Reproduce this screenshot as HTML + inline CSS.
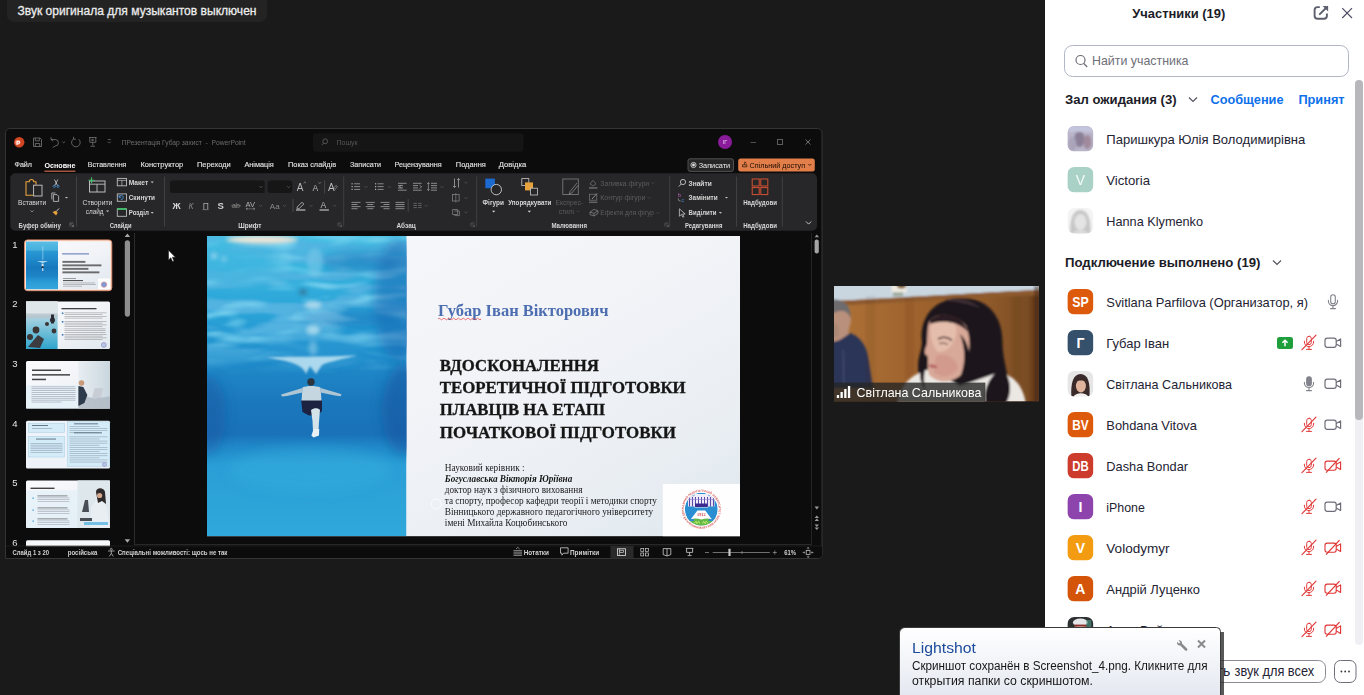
<!DOCTYPE html>
<html lang="ru"><head><meta charset="utf-8"><title>Zoom</title>
<style>
*{box-sizing:border-box;margin:0;padding:0}
html,body{width:1364px;height:695px;overflow:hidden;background:#1a1a1a;font-family:"Liberation Sans",sans-serif}
.layer{position:absolute;left:0;top:0;font-family:"Liberation Sans",sans-serif}
text{white-space:pre}
</style></head>
<body>
<svg width="0" height="0" style="position:absolute"><defs>
<clipPath id="avclip"><rect x="0" y="0" width="26" height="25.5" rx="7"/></clipPath>
<filter id="b1" x="-20%" y="-20%" width="140%" height="140%"><feGaussianBlur stdDeviation="1"/></filter>
<filter id="b05" x="-20%" y="-20%" width="140%" height="140%"><feGaussianBlur stdDeviation="0.5"/></filter>
<filter id="b2" x="-20%" y="-20%" width="140%" height="140%"><feGaussianBlur stdDeviation="2"/></filter>
<filter id="b3" x="-30%" y="-30%" width="160%" height="160%"><feGaussianBlur stdDeviation="3"/></filter>
<filter id="b6" x="-30%" y="-30%" width="160%" height="160%"><feGaussianBlur stdDeviation="6"/></filter>

<clipPath id="ppclip"><path d="M5.5 558 V133 a4.5 4.5 0 0 1 4.5 -4.5 H817.5 a4.5 4.5 0 0 1 4.5 4.5 V554 a4 4 0 0 1 -4 4 Z"/></clipPath>
<linearGradient id="slidebg" x1="0" y1="0" x2="1" y2="1"><stop offset="0" stop-color="#fafbfd"/><stop offset="0.55" stop-color="#f1f3f7"/><stop offset="1" stop-color="#dfe8ef"/></linearGradient>
<linearGradient id="water" x1="0" y1="0" x2="0" y2="1"><stop offset="0" stop-color="#4fb4e0"/><stop offset="0.12" stop-color="#2f9fd6"/><stop offset="0.3" stop-color="#2490cf"/><stop offset="0.55" stop-color="#1878bd"/><stop offset="0.72" stop-color="#1e84c6"/><stop offset="0.85" stop-color="#2c9cd6"/><stop offset="1" stop-color="#36a6dc"/></linearGradient>
<linearGradient id="pool" x1="0" y1="0" x2="0" y2="1"><stop offset="0" stop-color="#d8e4ea"/><stop offset="0.4" stop-color="#9ccfe0"/><stop offset="1" stop-color="#2fa4cc"/></linearGradient>
<linearGradient id="lab" x1="0" y1="0" x2="1" y2="0"><stop offset="0" stop-color="#e8eef2"/><stop offset="1" stop-color="#c9d6de"/></linearGradient>

<clipPath id="photoclip"><rect x="207" y="236" width="199.5" height="300.2"/></clipPath>
<radialGradient id="rg1" cx="0.5" cy="0.5" r="0.5"><stop offset="0" stop-color="#fff" stop-opacity="0.9"/><stop offset="1" stop-color="#fff" stop-opacity="0"/></radialGradient>
<linearGradient id="slidebg2" x1="0" y1="0" x2="1" y2="1"><stop offset="0" stop-color="#f6f7fa"/><stop offset="0.45" stop-color="#f3f4f8"/><stop offset="0.8" stop-color="#e9eef3"/><stop offset="1" stop-color="#dde7ee"/></linearGradient>

<linearGradient id="water2" x1="0" y1="0" x2="0" y2="1">
<stop offset="0" stop-color="#48c0e4"/><stop offset="0.1" stop-color="#38b4de"/><stop offset="0.25" stop-color="#2aa4d8"/><stop offset="0.4" stop-color="#208ecc"/><stop offset="0.55" stop-color="#1b78bc"/><stop offset="0.66" stop-color="#1a72b8"/><stop offset="0.7" stop-color="#2088c8"/><stop offset="0.76" stop-color="#2a9ed6"/><stop offset="1" stop-color="#2fa8da"/></linearGradient>
<filter id="waves" x="0" y="0" width="100%" height="100%"><feTurbulence type="fractalNoise" baseFrequency="0.012 0.07" numOctaves="3" seed="7" result="n"/><feColorMatrix in="n" type="matrix" values="0 0 0 0 0.09  0 0 0 0 0.45  0 0 0 0 0.75  7 0 0 0 -3.1"/><feGaussianBlur stdDeviation="0.8"/></filter>
<filter id="waves2" x="0" y="0" width="100%" height="100%"><feTurbulence type="fractalNoise" baseFrequency="0.02 0.09" numOctaves="2" seed="23" result="n"/><feColorMatrix in="n" type="matrix" values="0 0 0 0 0.27  0 0 0 0 0.72  0 0 0 0 0.91  0 4 0 0 -2.0"/><feGaussianBlur stdDeviation="0.8"/></filter>
<linearGradient id="wmaskg" x1="0" y1="0" x2="0" y2="1"><stop offset="0" stop-color="#fff" stop-opacity="0.75"/><stop offset="0.3" stop-color="#fff" stop-opacity="1"/><stop offset="0.38" stop-color="#fff" stop-opacity="0.6"/><stop offset="0.46" stop-color="#fff" stop-opacity="0"/></linearGradient>
<mask id="wmask"><rect x="207" y="236" width="200" height="301" fill="url(#wmaskg)"/></mask>
<linearGradient id="vign" x1="0" y1="0" x2="1" y2="0"><stop offset="0" stop-color="#10509c" stop-opacity="0.28"/><stop offset="0.18" stop-color="#10509c" stop-opacity="0"/><stop offset="0.7" stop-color="#10509c" stop-opacity="0"/><stop offset="1" stop-color="#0e4a98" stop-opacity="0.42"/></linearGradient>

<clipPath id="logoclip"><circle cx="701.3" cy="509.2" r="16.4"/></clipPath><path id="logoarc" d="M701.3 526.7 a17.5 17.5 0 1 1 0.01 0"/>
<clipPath id="vclip"><rect x="834" y="286" width="205" height="115.3"/></clipPath>
<linearGradient id="wood" x1="0" y1="0" x2="1" y2="0"><stop offset="0" stop-color="#ae7238"/><stop offset="0.35" stop-color="#a0642e"/><stop offset="0.75" stop-color="#905a2a"/><stop offset="1" stop-color="#744822"/></linearGradient>

<linearGradient id="lsbg" x1="0" y1="0" x2="0" y2="1"><stop offset="0" stop-color="#ffffff"/><stop offset="0.35" stop-color="#f6f7fa"/><stop offset="1" stop-color="#e2e6ef"/></linearGradient>
</defs></svg>
<svg id="bg" class="layer" width="1364" height="695" viewBox="0 0 1364 695" >
<rect x="0" y="0" width="1045" height="695" fill="#1a1a1a"/>
<rect x="7" y="-8" width="260" height="30" fill="#232323" rx="7"/>
<text x="17.5" y="15.2" font-size="13" fill="#ececec" textLength="239" lengthAdjust="spacingAndGlyphs" stroke="#ececec" stroke-width="0.3">Звук оригинала для музыкантов выключен</text>
</svg>
<svg id="panel" class="layer" width="1364" height="695" viewBox="0 0 1364 695" >
<rect x="1045" y="0" width="319" height="695" fill="#ffffff"/>
<text x="1132.3" y="17.8" font-size="13.6" fill="#1c1c28" font-weight="bold" textLength="93" lengthAdjust="spacingAndGlyphs">Участники (19)</text>
<path d="M1319.8 7.1 h-2.2 a3 3 0 0 0 -3 3 v5.6 a3 3 0 0 0 3 3 h6.3 a3 3 0 0 0 3 -3 v-2.2" fill="none" stroke="#5c606c" stroke-width="1.9" stroke-linecap="butt"/>
<path d="M1319.8 14.2 L1326 8" fill="none" stroke="#5c606c" stroke-width="1.9" stroke-linecap="round"/>
<path d="M1322.6 6.1 H1328.1 V11.6 Z" fill="#5c606c"/>
<path d="M1342.2 8.2 L1352 18 M1352 8.2 L1342.2 18" fill="none" stroke="#4c4a60" stroke-width="1.15"/>
<rect x="1064.5" y="45.5" width="284" height="31" fill="#fff" rx="8" stroke="#b2b6c4" stroke-width="1"/>
<circle cx="1080.5" cy="60" r="4.5" fill="none" stroke="#6e6e78" stroke-width="1.2"/>
<line x1="1083.8" y1="63.5" x2="1087.2" y2="67" stroke="#6e6e78" stroke-width="1.2" />
<text x="1092" y="65.3" font-size="13.5" fill="#6e6e78" textLength="96.5" lengthAdjust="spacingAndGlyphs">Найти участника</text>
<rect x="1355" y="80" width="8" height="565" fill="#f0f0f4" rx="4"/>
<rect x="1355" y="80" width="8" height="340" fill="#b7b7bc" rx="4"/>
<text x="1065" y="103.8" font-size="13.6" fill="#1c1c28" font-weight="bold" textLength="111.6" lengthAdjust="spacingAndGlyphs">Зал ожидания (3)</text>
<path d="M1189 97.5 l4 4 l4 -4" fill="none" stroke="#55555f" stroke-width="1.2"/>
<text x="1210.5" y="103.8" font-size="13.6" fill="#0e71eb" font-weight="bold" textLength="73" lengthAdjust="spacingAndGlyphs">Сообщение</text>
<text x="1298.4" y="103.8" font-size="13.6" fill="#0e71eb" font-weight="bold" textLength="46.2" lengthAdjust="spacingAndGlyphs">Принят</text>
<text x="1065" y="266.8" font-size="13.6" fill="#1c1c28" font-weight="bold" textLength="195.5" lengthAdjust="spacingAndGlyphs">Подключение выполнено (19)</text>
<path d="M1273 260.5 l4 4 l4 -4" fill="none" stroke="#55555f" stroke-width="1.2"/>
<g transform="translate(1067.4,126)" clip-path="url(#avclip)"><rect width="26" height="25.5" fill="#b9b4c8"/><g filter="url(#b1)"><ellipse cx="12" cy="13" rx="5" ry="8" fill="#8a7f96"/><ellipse cx="20" cy="16" rx="4" ry="7" fill="#a08a9c"/><rect x="0" y="0" width="26" height="6" fill="#c4c4dc"/><ellipse cx="5" cy="18" rx="4" ry="7" fill="#aaa4ba"/></g></g>
<text x="1106.3" y="143.8" font-size="13.5" fill="#232333" textLength="199" lengthAdjust="spacingAndGlyphs">Паришкура Юлія Володимирівна</text>
<g transform="translate(1067.4,167)" clip-path="url(#avclip)"><rect width="26" height="25.5" fill="#a9d1c5"/></g>
<text x="1080.4" y="185" font-size="14" font-weight="normal" fill="#fff" text-anchor="middle" opacity="0.9">V</text>
<text x="1106.3" y="184.8" font-size="13.5" fill="#232333" textLength="43.7" lengthAdjust="spacingAndGlyphs">Victoria</text>
<g transform="translate(1067.4,208)" clip-path="url(#avclip)"><rect width="26" height="25.5" fill="#f4f4f4"/><g filter="url(#b1)"><path d="M3 26 C2 10 6 2 13 2 C20 2 24 10 23 26 Z" fill="#c6c6c6"/><ellipse cx="13" cy="14" rx="6" ry="8" fill="#e4e4e4"/><ellipse cx="13" cy="26" rx="8" ry="4" fill="#dcdcdc"/></g></g>
<text x="1106.3" y="225.8" font-size="13.5" fill="#232333" textLength="96.7" lengthAdjust="spacingAndGlyphs">Hanna Klymenko</text>
<g transform="translate(1067.4,289)" clip-path="url(#avclip)"><rect width="26" height="25.5" fill="#dd5a0c"/></g>
<text x="1072.2" y="307" font-size="14" font-weight="bold" fill="#fff" textLength="16.4" lengthAdjust="spacingAndGlyphs">SP</text>
<text x="1106.3" y="306.8" font-size="13.5" fill="#232333" textLength="201.7" lengthAdjust="spacingAndGlyphs">Svitlana Parfilova (Организатор, я)</text>
<g stroke="#82828c" stroke-width="1.1" fill="none" stroke-linecap="round"><rect x="1330.7" y="294.7" width="4.6" height="9" rx="2.3" fill="none"/><path d="M1328.4 300.2 v0.8 a4.6 4.6 0 0 0 9.2 0 v-0.8"/><path d="M1333 305.7 v2.6 M1330.5 308.59999999999997 h5"/></g>
<g transform="translate(1067.4,330)" clip-path="url(#avclip)"><rect width="26" height="25.5" fill="#35506b"/></g>
<text x="1080.4" y="348" font-size="14" font-weight="bold" fill="#fff" text-anchor="middle">Г</text>
<text x="1106.3" y="347.8" font-size="13.5" fill="#232333" textLength="62.8" lengthAdjust="spacingAndGlyphs">Губар Іван</text>
<rect x="1277" y="337" width="16" height="12" fill="#1f9e3c" rx="2.5"/>
<path d="M1285 346.2 v-5.6 M1282.4 342.8 l2.6 -2.6 l2.6 2.6" fill="none" stroke="#fff" stroke-width="1.5"/>
<g stroke="#de2828" stroke-width="1" fill="none" stroke-linecap="round" opacity="0.9"><rect x="1306.7" y="336.2" width="4.6" height="8.5" rx="2.3"/><path d="M1304.4 341.2 v0.8 a4.6 4.6 0 0 0 9.2 0 v-0.8"/><path d="M1309 346.7 v2.4 M1306.5 349.4 h5"/><path d="M1316 335.2 L1302 349.7" stroke-width="1.2"/></g>
<g stroke="#6e6e7a" stroke-width="1.2" fill="none" stroke-linejoin="round"><rect x="1325" y="338.09999999999997" width="11.2" height="9.2" rx="2.2"/><path d="M1336.2 341.5 L1340.6 338.9 V346.5 L1336.2 343.9"/></g>
<g transform="translate(1067.4,371)" clip-path="url(#avclip)"><rect width="26" height="25.5" fill="#e6e6e6"/><g filter="url(#b05)"><path d="M4 26 C3 12 6 3 13 3 C21 3 23 12 22 26 Z" fill="#3a2c2a"/><ellipse cx="13.5" cy="15" rx="5" ry="6.5" fill="#e0b49c"/><path d="M7 11 C9 6 18 6 20 11 C16 9 11 9 7 11Z" fill="#3a2c2a"/><path d="M6 26 C8 21 19 21 21 26Z" fill="#f2f0ee"/></g></g>
<text x="1106.3" y="388.8" font-size="13.5" fill="#232333" textLength="125.7" lengthAdjust="spacingAndGlyphs">Світлана Сальникова</text>
<g stroke="#82828c" stroke-width="1.1" fill="none" stroke-linecap="round"><rect x="1306.7" y="376.7" width="4.6" height="9" rx="2.3" fill="#82828c"/><path d="M1304.4 382.2 v0.8 a4.6 4.6 0 0 0 9.2 0 v-0.8"/><path d="M1309 387.7 v2.6 M1306.5 390.59999999999997 h5"/></g>
<g stroke="#6e6e7a" stroke-width="1.2" fill="none" stroke-linejoin="round"><rect x="1325" y="379.09999999999997" width="11.2" height="9.2" rx="2.2"/><path d="M1336.2 382.5 L1340.6 379.9 V387.5 L1336.2 384.9"/></g>
<g transform="translate(1067.4,412)" clip-path="url(#avclip)"><rect width="26" height="25.5" fill="#dd5a0c"/></g>
<text x="1072.2" y="430" font-size="14" font-weight="bold" fill="#fff" textLength="16.4" lengthAdjust="spacingAndGlyphs">BV</text>
<text x="1106.3" y="429.8" font-size="13.5" fill="#232333" textLength="90.6" lengthAdjust="spacingAndGlyphs">Bohdana Vitova</text>
<g stroke="#de2828" stroke-width="1" fill="none" stroke-linecap="round" opacity="0.9"><rect x="1306.7" y="418.2" width="4.6" height="8.5" rx="2.3"/><path d="M1304.4 423.2 v0.8 a4.6 4.6 0 0 0 9.2 0 v-0.8"/><path d="M1309 428.7 v2.4 M1306.5 431.4 h5"/><path d="M1316 417.2 L1302 431.7" stroke-width="1.2"/></g>
<g stroke="#6e6e7a" stroke-width="1.2" fill="none" stroke-linejoin="round"><rect x="1325" y="420.09999999999997" width="11.2" height="9.2" rx="2.2"/><path d="M1336.2 423.5 L1340.6 420.9 V428.5 L1336.2 425.9"/></g>
<g transform="translate(1067.4,453)" clip-path="url(#avclip)"><rect width="26" height="25.5" fill="#cc3b2b"/></g>
<text x="1072.2" y="471" font-size="14" font-weight="bold" fill="#fff" textLength="16.4" lengthAdjust="spacingAndGlyphs">DB</text>
<text x="1106.3" y="470.8" font-size="13.5" fill="#232333" textLength="81.8" lengthAdjust="spacingAndGlyphs">Dasha Bondar</text>
<g stroke="#de2828" stroke-width="1" fill="none" stroke-linecap="round" opacity="0.9"><rect x="1306.7" y="459.2" width="4.6" height="8.5" rx="2.3"/><path d="M1304.4 464.2 v0.8 a4.6 4.6 0 0 0 9.2 0 v-0.8"/><path d="M1309 469.7 v2.4 M1306.5 472.4 h5"/><path d="M1316 458.2 L1302 472.7" stroke-width="1.2"/></g>
<g stroke="#de2828" stroke-width="1.1" fill="none" stroke-linejoin="round" opacity="0.95"><rect x="1325" y="461.09999999999997" width="11.2" height="9.2" rx="2.2"/><path d="M1336.2 464.5 L1340.6 461.9 V469.5 L1336.2 466.9"/><path d="M1339.5 458.2 L1326 472.7" stroke-width="1.2"/></g>
<g transform="translate(1067.4,494)" clip-path="url(#avclip)"><rect width="26" height="25.5" fill="#8e44ad"/></g>
<text x="1080.4" y="512" font-size="14" font-weight="bold" fill="#fff" text-anchor="middle">I</text>
<text x="1106.3" y="511.8" font-size="13.5" fill="#232333" textLength="38.6" lengthAdjust="spacingAndGlyphs">iPhone</text>
<g stroke="#de2828" stroke-width="1" fill="none" stroke-linecap="round" opacity="0.9"><rect x="1306.7" y="500.2" width="4.6" height="8.5" rx="2.3"/><path d="M1304.4 505.2 v0.8 a4.6 4.6 0 0 0 9.2 0 v-0.8"/><path d="M1309 510.7 v2.4 M1306.5 513.4 h5"/><path d="M1316 499.2 L1302 513.7" stroke-width="1.2"/></g>
<g stroke="#6e6e7a" stroke-width="1.2" fill="none" stroke-linejoin="round"><rect x="1325" y="502.09999999999997" width="11.2" height="9.2" rx="2.2"/><path d="M1336.2 505.5 L1340.6 502.9 V510.5 L1336.2 507.9"/></g>
<g transform="translate(1067.4,535)" clip-path="url(#avclip)"><rect width="26" height="25.5" fill="#f39c12"/></g>
<text x="1080.4" y="553" font-size="14" font-weight="bold" fill="#fff" text-anchor="middle">V</text>
<text x="1106.3" y="552.8" font-size="13.5" fill="#232333" textLength="63.3" lengthAdjust="spacingAndGlyphs">Volodymyr</text>
<g stroke="#de2828" stroke-width="1" fill="none" stroke-linecap="round" opacity="0.9"><rect x="1306.7" y="541.2" width="4.6" height="8.5" rx="2.3"/><path d="M1304.4 546.2 v0.8 a4.6 4.6 0 0 0 9.2 0 v-0.8"/><path d="M1309 551.7 v2.4 M1306.5 554.4000000000001 h5"/><path d="M1316 540.2 L1302 554.7" stroke-width="1.2"/></g>
<g stroke="#de2828" stroke-width="1.1" fill="none" stroke-linejoin="round" opacity="0.95"><rect x="1325" y="543.1" width="11.2" height="9.2" rx="2.2"/><path d="M1336.2 546.5 L1340.6 543.9000000000001 V551.5 L1336.2 548.9000000000001"/><path d="M1339.5 540.2 L1326 554.7" stroke-width="1.2"/></g>
<g transform="translate(1067.4,576)" clip-path="url(#avclip)"><rect width="26" height="25.5" fill="#d4540a"/></g>
<text x="1080.4" y="594" font-size="14" font-weight="bold" fill="#fff" text-anchor="middle">A</text>
<text x="1106.3" y="593.8" font-size="13.5" fill="#232333" textLength="93.6" lengthAdjust="spacingAndGlyphs">Андрій Луценко</text>
<g stroke="#de2828" stroke-width="1" fill="none" stroke-linecap="round" opacity="0.9"><rect x="1306.7" y="582.2" width="4.6" height="8.5" rx="2.3"/><path d="M1304.4 587.2 v0.8 a4.6 4.6 0 0 0 9.2 0 v-0.8"/><path d="M1309 592.7 v2.4 M1306.5 595.4000000000001 h5"/><path d="M1316 581.2 L1302 595.7" stroke-width="1.2"/></g>
<g stroke="#de2828" stroke-width="1.1" fill="none" stroke-linejoin="round" opacity="0.95"><rect x="1325" y="584.1" width="11.2" height="9.2" rx="2.2"/><path d="M1336.2 587.5 L1340.6 584.9000000000001 V592.5 L1336.2 589.9000000000001"/><path d="M1339.5 581.2 L1326 595.7" stroke-width="1.2"/></g>
<g transform="translate(1067.4,617)" clip-path="url(#avclip)"><rect width="26" height="25.5" fill="#2c3030"/><g filter="url(#b05)"><ellipse cx="13" cy="10.5" rx="6" ry="5" fill="#b87860"/><ellipse cx="13" cy="5.5" rx="7.5" ry="4" fill="#e4e6e8"/><rect x="7" y="7.6" width="12" height="1.6" fill="#8a2c2c"/><rect x="19" y="3" width="5" height="8" fill="#4a8a7a" opacity="0.7"/></g></g>
<text x="1106.3" y="634.8" font-size="13.5" fill="#232333" textLength="90" lengthAdjust="spacingAndGlyphs">Анна Войтенко</text>
<g stroke="#de2828" stroke-width="1" fill="none" stroke-linecap="round" opacity="0.9"><rect x="1306.7" y="623.2" width="4.6" height="8.5" rx="2.3"/><path d="M1304.4 628.2 v0.8 a4.6 4.6 0 0 0 9.2 0 v-0.8"/><path d="M1309 633.7 v2.4 M1306.5 636.4000000000001 h5"/><path d="M1316 622.2 L1302 636.7" stroke-width="1.2"/></g>
<g stroke="#de2828" stroke-width="1.1" fill="none" stroke-linejoin="round" opacity="0.95"><rect x="1325" y="625.1" width="11.2" height="9.2" rx="2.2"/><path d="M1336.2 628.5 L1340.6 625.9000000000001 V633.5 L1336.2 630.9000000000001"/><path d="M1339.5 622.2 L1326 636.7" stroke-width="1.2"/></g>
<rect x="1130.5" y="660.5" width="195" height="22" fill="#fff" rx="7" stroke="#8a8a94" stroke-width="1"/>
<text x="1234.6" y="676.2" font-size="14" fill="#232333" textLength="79.5" lengthAdjust="spacingAndGlyphs">звук для всех</text>
<text x="1216.5" y="676.2" font-size="14" fill="#232333">ть</text>
<rect x="1334.5" y="660.5" width="21.5" height="22" fill="#fff" rx="6" stroke="#6e6e78" stroke-width="1"/>
<circle cx="1341.4" cy="671.5" r="0.9" fill="#333"/>
<circle cx="1345.2" cy="671.5" r="0.9" fill="#333"/>
<circle cx="1349" cy="671.5" r="0.9" fill="#333"/>
</svg>
<svg id="ppt" class="layer" width="1364" height="695" viewBox="0 0 1364 695" >
<path d="M5.5 558.5 V133 a4.5 4.5 0 0 1 4.5 -4.5 H817.5 a4.5 4.5 0 0 1 4.5 4.5 V554.5 a4 4 0 0 1 -4 4 Z" fill="#0c0c0d" stroke="#343434" stroke-width="1"/>
<g filter="url(#b05)">
<circle cx="19.2" cy="142.3" r="5.2" fill="#d04423"/>
<circle cx="17.8" cy="142.3" r="2.6" fill="#f08a6a"/>
<text x="16.2" y="144.6" font-size="6" fill="#fff" font-weight="bold">P</text>
<path d="M33.5 138 h6.5 l1.5 1.5 v7 h-8 Z M35.3 138 v2.8 h4 v-2.8 M35.3 146.5 v-3 h4.4 v3" fill="none" stroke="#6c6c6c" stroke-width="0.9"/>
<path d="M51 139.5 h4.2 a3 3 0 0 1 0 6.5 l-2.4 1.5 M51 139.5 v-2.2 M51 139.5 l2.2 1.6" fill="none" stroke="#6c6c6c" stroke-width="0.9"/>
<path d="M62.3 141.5 l1.4 1.4 l1.4 -1.4" fill="none" stroke="#6c6c6c" stroke-width="0.8"/>
<path d="M78.8 139.3 a4.3 4.3 0 1 1 -5 -0.6 M73.5 136.8 v2.4 h2.4" fill="none" stroke="#6c6c6c" stroke-width="0.9"/>
<path d="M89 137.5 h7.6 M89.8 137.5 v4.8 h6 v-4.8 M92.8 142.3 v3 M90.6 146.2 h4.4 M92 139 l1.8 1 l-1.8 1 Z" fill="none" stroke="#6c6c6c" stroke-width="0.9"/>
<path d="M107.8 139.5 h3 M107.8 141.6 l1.5 1.5 l1.5 -1.5" fill="none" stroke="#6c6c6c" stroke-width="0.8"/>
<text x="121.7" y="144.8" font-size="7.6" fill="#6c6c6c" textLength="124" lengthAdjust="spacingAndGlyphs">ПРезентація Губар захист  -  PowerPoint</text>
</g>
<rect x="313" y="133.3" width="210.5" height="18.4" fill="#151516" rx="3"/>
<g filter="url(#b05)">
<circle cx="325.2" cy="141.3" r="2.4" fill="none" stroke="#5a5a5a" stroke-width="0.9"/>
<line x1="323.5" y1="143.2" x2="321.8" y2="145.2" stroke="#5a5a5a" stroke-width="0.9" />
<text x="336.6" y="144.8" font-size="7.6" fill="#555" textLength="21" lengthAdjust="spacingAndGlyphs">Пошук</text>
<circle cx="725" cy="142" r="7" fill="#8a1a9c"/>
<text x="725" y="144.2" font-size="5.5" fill="#e8d0f0" text-anchor="middle">ІГ</text>
<line x1="750.5" y1="142.5" x2="756" y2="142.5" stroke="#555" stroke-width="0.9" />
<rect x="777.5" y="139.5" width="5" height="5" fill="none" stroke="#666" stroke-width="0.9"/>
<path d="M805.5 139.5 l5 5 M810.5 139.5 l-5 5" fill="none" stroke="#777" stroke-width="0.9"/>
<text x="14.5" y="167.4" font-size="7.6" fill="#e2e2e2" textLength="17.5" lengthAdjust="spacingAndGlyphs" stroke="#e2e2e2" stroke-width="0.12">Файл</text>
<text x="87.8" y="167.4" font-size="7.6" fill="#e2e2e2" textLength="38.6" lengthAdjust="spacingAndGlyphs" stroke="#e2e2e2" stroke-width="0.12">Вставлення</text>
<text x="140.4" y="167.4" font-size="7.6" fill="#e2e2e2" textLength="42.9" lengthAdjust="spacingAndGlyphs" stroke="#e2e2e2" stroke-width="0.12">Конструктор</text>
<text x="197" y="167.4" font-size="7.6" fill="#e2e2e2" textLength="33.7" lengthAdjust="spacingAndGlyphs" stroke="#e2e2e2" stroke-width="0.12">Переходи</text>
<text x="244.4" y="167.4" font-size="7.6" fill="#e2e2e2" textLength="29.4" lengthAdjust="spacingAndGlyphs" stroke="#e2e2e2" stroke-width="0.12">Анімація</text>
<text x="288" y="167.4" font-size="7.6" fill="#e2e2e2" textLength="48.2" lengthAdjust="spacingAndGlyphs" stroke="#e2e2e2" stroke-width="0.12">Показ слайдів</text>
<text x="350" y="167.4" font-size="7.6" fill="#e2e2e2" textLength="31" lengthAdjust="spacingAndGlyphs" stroke="#e2e2e2" stroke-width="0.12">Записати</text>
<text x="394.5" y="167.4" font-size="7.6" fill="#e2e2e2" textLength="47.1" lengthAdjust="spacingAndGlyphs" stroke="#e2e2e2" stroke-width="0.12">Рецензування</text>
<text x="455.8" y="167.4" font-size="7.6" fill="#e2e2e2" textLength="30.0" lengthAdjust="spacingAndGlyphs" stroke="#e2e2e2" stroke-width="0.12">Подання</text>
<text x="498.7" y="167.4" font-size="7.6" fill="#e2e2e2" textLength="27.5" lengthAdjust="spacingAndGlyphs" stroke="#e2e2e2" stroke-width="0.12">Довідка</text>
<text x="44.4" y="167.6" font-size="7.6" fill="#ffffff" font-weight="bold" textLength="31" lengthAdjust="spacingAndGlyphs">Основне</text>
<rect x="44.4" y="170.6" width="31" height="1.2" fill="#c8664a"/>
<rect x="688" y="158.8" width="45.5" height="12.6" fill="#262626" rx="2" stroke="#5e5e5e" stroke-width="0.8"/>
<circle cx="693.5" cy="165" r="2.6" fill="none" stroke="#e0e0e0" stroke-width="0.8"/>
<circle cx="693.5" cy="165" r="1.4" fill="#e0e0e0"/>
<text x="698.7" y="167.6" font-size="7.6" fill="#f0f0f0" textLength="31.5" lengthAdjust="spacingAndGlyphs">Записати</text>
<rect x="738.2" y="158.5" width="76.6" height="13" fill="#e27e48" rx="2.5"/>
<path d="M742.5 166.8 v-2 h4.4 v2 Z M744.7 164.6 v-2.6 l1.8 1" fill="none" stroke="#2a1408" stroke-width="0.7"/>
<text x="749.6" y="167.6" font-size="7.6" fill="#1a0c04" textLength="55.5" lengthAdjust="spacingAndGlyphs">Спільний доступ</text>
<path d="M808.3 164 l1.5 1.5 l1.5 -1.5" fill="none" stroke="#2a1408" stroke-width="0.8"/>
</g>
<rect x="10.3" y="173.3" width="806.7" height="57.4" fill="#272628" rx="5"/>
<g filter="url(#b05)">
<line x1="76.5" y1="176.5" x2="76.5" y2="226.5" stroke="#474747" stroke-width="0.8" />
<line x1="164.6" y1="176.5" x2="164.6" y2="226.5" stroke="#474747" stroke-width="0.8" />
<line x1="343.7" y1="176.5" x2="343.7" y2="226.5" stroke="#474747" stroke-width="0.8" />
<line x1="476.7" y1="176.5" x2="476.7" y2="226.5" stroke="#474747" stroke-width="0.8" />
<line x1="669.7" y1="176.5" x2="669.7" y2="226.5" stroke="#474747" stroke-width="0.8" />
<line x1="736.6" y1="176.5" x2="736.6" y2="226.5" stroke="#474747" stroke-width="0.8" />
<line x1="782.3" y1="176.5" x2="782.3" y2="226.5" stroke="#474747" stroke-width="0.8" />
<path d="M27 181.8 h-1 v13.5 h7.5 M27 181.8 h2.2 a2.3 2.3 0 0 1 4.6 0 h2.2 v3" fill="none" stroke="#e6a23c" stroke-width="1.1"/>
<rect x="33.6" y="185.2" width="8.4" height="10.8" fill="#272628" stroke="#c8c8c8" stroke-width="0.9"/>
<text x="18" y="205.2" font-size="7.6" fill="#d6d6d6" textLength="28.3" lengthAdjust="spacingAndGlyphs">Вставити</text>
<path d="M30.5 210.39999999999998 l1.5 1.5 l1.5 -1.5" fill="none" stroke="#c0c0c0" stroke-width="0.7"/>
<path d="M54.5 179.5 l3 6 M57.8 179.5 l-3 6" fill="none" stroke="#cfcfcf" stroke-width="0.8"/>
<circle cx="54.3" cy="186.3" r="1.1" fill="none" stroke="#4a90d8" stroke-width="0.8"/>
<circle cx="58" cy="186.3" r="1.1" fill="none" stroke="#4a90d8" stroke-width="0.8"/>
<path d="M53.4 194.6 h3.6 l1.6 1.6 v5.2 h-5.2 Z M51.8 199.4 v-6.4 h3.6" fill="none" stroke="#c8c8c8" stroke-width="0.8"/>
<path d="M64.9 197.0 l1.6 1.6 l1.6 -1.6 Z" fill="#bdbdbd"/>
<path d="M59 208.5 l-3 3.2" fill="none" stroke="#cfcfcf" stroke-width="1"/>
<path d="M52.5 212 l3.2 -1.2 l2 2 l-1.6 2.8 Z" fill="#e6a23c"/>
<text x="18.6" y="227.5" font-size="7.6" fill="#d6d6d6" font-weight="bold" textLength="42.2" lengthAdjust="spacingAndGlyphs">Буфер обміну</text>
<path d="M70 223 h3.5 M70 223 v3.5 M71.3 224.3 l2.2 2.2 M73.5 224.6 v2.1 h-2.1" fill="none" stroke="#8a8a8a" stroke-width="0.6"/>
<rect x="89.5" y="181" width="15.5" height="11" fill="none" stroke="#bdbdbd" stroke-width="1"/>
<path d="M89.5 184.2 h15.5 M97 184.2 v7.8" fill="none" stroke="#bdbdbd" stroke-width="0.9"/>
<path d="M91.5 177.2 v6 M88.5 180.2 h6" fill="none" stroke="#3fbf6a" stroke-width="1.1"/>
<text x="82.6" y="205" font-size="7.6" fill="#d6d6d6" textLength="29.7" lengthAdjust="spacingAndGlyphs">Створити</text>
<text x="85.8" y="214" font-size="7.6" fill="#d6d6d6" textLength="17.8" lengthAdjust="spacingAndGlyphs">слайд</text>
<path d="M106.0 210.6 l1.6 1.6 l1.6 -1.6 Z" fill="#bdbdbd"/>
<rect x="117.3" y="178.39999999999998" width="9.2" height="7.4" fill="none" stroke="#bdbdbd" stroke-width="0.9"/>
<path d="M117.3 180.39999999999998 h9.2 M121.9 180.39999999999998 v5.4" fill="none" stroke="#bdbdbd" stroke-width="0.7"/>
<text x="128.7" y="184.89999999999998" font-size="7.6" fill="#d6d6d6" font-weight="bold" textLength="19.5" lengthAdjust="spacingAndGlyphs">Макет</text>
<path d="M150.6 181.59999999999997 l1.6 1.6 l1.6 -1.6 Z" fill="#bdbdbd"/>
<rect x="117.3" y="193.89999999999998" width="9.2" height="7.4" fill="none" stroke="#bdbdbd" stroke-width="0.9"/>
<path d="M119.3 197.2 a2 2 0 1 1 1.5 2.2 M119 194.89999999999998 v2.4 h2.2" fill="none" stroke="#4a90d8" stroke-width="0.9"/>
<text x="128.7" y="200.39999999999998" font-size="7.6" fill="#d6d6d6" font-weight="bold" textLength="26.3" lengthAdjust="spacingAndGlyphs">Скинути</text>
<rect x="117.3" y="208.89999999999998" width="9.2" height="7.4" fill="none" stroke="#bdbdbd" stroke-width="0.9"/>
<rect x="117.3" y="208.1" width="9.2" height="1.8" fill="#3fbf6a"/>
<text x="128.7" y="215.39999999999998" font-size="7.6" fill="#d6d6d6" font-weight="bold" textLength="20.2" lengthAdjust="spacingAndGlyphs">Розділ</text>
<path d="M150.6 212.09999999999997 l1.6 1.6 l1.6 -1.6 Z" fill="#bdbdbd"/>
<text x="109.7" y="227.5" font-size="7.6" fill="#d6d6d6" font-weight="bold" textLength="21.9" lengthAdjust="spacingAndGlyphs">Слайди</text>
<rect x="170" y="180.7" width="94.8" height="12.4" fill="#161616" rx="2"/>
<rect x="267.8" y="180.7" width="24.3" height="12.4" fill="#161616" rx="2"/>
<path d="M259.5 186.2 l1.5 1.5 l1.5 -1.5" fill="none" stroke="#6a6a6a" stroke-width="0.7"/>
<path d="M287.1 186.2 l1.5 1.5 l1.5 -1.5" fill="none" stroke="#6a6a6a" stroke-width="0.7"/>
<text x="296.7" y="190.6" font-size="10" fill="#b8b8b8">A</text>
<path d="M303.6 183.2 l1.2 -1.2 l1.2 1.2" fill="none" stroke="#b8b8b8" stroke-width="0.6"/>
<text x="312.6" y="190.6" font-size="8.5" fill="#b8b8b8">A</text>
<path d="M318.6 182.4 l1.1 1.1 l1.1 -1.1" fill="none" stroke="#b8b8b8" stroke-width="0.6"/>
<line x1="324.6" y1="180.3" x2="324.6" y2="193.5" stroke="#555" stroke-width="0.7" />
<text x="328" y="190.6" font-size="10" fill="#b8b8b8">A</text>
<path d="M333.5 188 l2.6 -2.6 l1.4 1.4 l-2.6 2.6 Z" fill="none" stroke="#b8b8b8" stroke-width="0.6"/>
<text x="172.5" y="208.6" font-size="9" fill="#d8d8d8" font-weight="bold">Ж</text>
<text x="188.4" y="208.6" font-size="8.5" fill="#8a8a8a" font-style="italic">К</text>
<text x="202.7" y="208.6" font-size="8.5" fill="#a8a8a8">П</text>
<line x1="202.6" y1="209.6" x2="208.6" y2="209.6" stroke="#a8a8a8" stroke-width="0.6" />
<text x="217.6" y="208.6" font-size="9.5" fill="#d0d0d0" font-weight="bold">S</text>
<text x="232" y="208.2" font-size="7" fill="#8a8a8a">ab</text>
<line x1="231" y1="205.8" x2="241" y2="205.8" stroke="#8a8a8a" stroke-width="0.6" />
<text x="245.6" y="207.1" font-size="7.5" fill="#b0b0b0">AV</text>
<path d="M246 208.8 h9 M246 208.8 l1.2 -0.9 v1.8 Z M255 208.8 l-1.2 -0.9 v1.8 Z" fill="none" stroke="#9a9a9a" stroke-width="0.5"/>
<path d="M259.1 205.0 l1.5 1.5 l1.5 -1.5" fill="none" stroke="#5a5a5a" stroke-width="0.7"/>
<text x="269.8" y="208.6" font-size="8" fill="#8a8a8a">Aa</text>
<path d="M282.9 205.0 l1.5 1.5 l1.5 -1.5" fill="none" stroke="#5a5a5a" stroke-width="0.7"/>
<line x1="293" y1="199" x2="293" y2="212" stroke="#555" stroke-width="0.7" />
<path d="M297.2 207 l4.8 -4.8 l1.8 1.8 l-4.8 4.8 h-1.8 Z" fill="none" stroke="#d8d8d8" stroke-width="0.7"/>
<rect x="296" y="209.2" width="9.4" height="1.6" fill="#9a9a9a"/>
<path d="M309.5 205.0 l1.5 1.5 l1.5 -1.5" fill="none" stroke="#5a5a5a" stroke-width="0.7"/>
<text x="320.4" y="207.8" font-size="8.5" fill="#b8b8b8">A</text>
<rect x="319.5" y="209.2" width="9.4" height="1.6" fill="#9a9a9a"/>
<path d="M333.1 205.0 l1.5 1.5 l1.5 -1.5" fill="none" stroke="#5a5a5a" stroke-width="0.7"/>
<text x="238.3" y="227.5" font-size="7.6" fill="#d6d6d6" font-weight="bold" textLength="23.2" lengthAdjust="spacingAndGlyphs">Шрифт</text>
<path d="M338 223 h3.5 M338 223 v3.5 M339.3 224.3 l2.2 2.2 M341.5 224.6 v2.1 h-2.1" fill="none" stroke="#6a6a6a" stroke-width="0.6"/>
<rect x="351.5" y="183.20000000000002" width="1.2" height="1.2" fill="#b4b4b4"/>
<rect x="351.5" y="186.00000000000003" width="1.2" height="1.2" fill="#b4b4b4"/>
<rect x="351.5" y="188.8" width="1.2" height="1.2" fill="#b4b4b4"/>
<line x1="354.1" y1="183.8" x2="360.1" y2="183.8" stroke="#b4b4b4" stroke-width="0.7" />
<line x1="354.1" y1="186.60000000000002" x2="360.1" y2="186.60000000000002" stroke="#b4b4b4" stroke-width="0.7" />
<line x1="354.1" y1="189.4" x2="360.1" y2="189.4" stroke="#b4b4b4" stroke-width="0.7" />
<rect x="375" y="183.20000000000002" width="1.2" height="1.2" fill="#b4b4b4"/>
<rect x="375" y="186.00000000000003" width="1.2" height="1.2" fill="#b4b4b4"/>
<rect x="375" y="188.8" width="1.2" height="1.2" fill="#b4b4b4"/>
<line x1="377.6" y1="183.8" x2="383.6" y2="183.8" stroke="#b4b4b4" stroke-width="0.7" />
<line x1="377.6" y1="186.60000000000002" x2="383.6" y2="186.60000000000002" stroke="#b4b4b4" stroke-width="0.7" />
<line x1="377.6" y1="189.4" x2="383.6" y2="189.4" stroke="#b4b4b4" stroke-width="0.7" />
<path d="M364.5 186.2 l1.5 1.5 l1.5 -1.5" fill="none" stroke="#5a5a5a" stroke-width="0.7"/>
<path d="M388.1 186.2 l1.5 1.5 l1.5 -1.5" fill="none" stroke="#5a5a5a" stroke-width="0.7"/>
<line x1="398" y1="183.3" x2="406.6" y2="183.3" stroke="#b4b4b4" stroke-width="0.7" />
<line x1="398" y1="185.60000000000002" x2="403" y2="185.60000000000002" stroke="#b4b4b4" stroke-width="0.7" />
<line x1="398" y1="187.9" x2="403" y2="187.9" stroke="#b4b4b4" stroke-width="0.7" />
<line x1="398" y1="190.20000000000002" x2="406.6" y2="190.20000000000002" stroke="#b4b4b4" stroke-width="0.7" />
<path d="M401.5 185.2 l-2.2 1.6 l2.2 1.6" fill="none" stroke="#b4b4b4" stroke-width="0.6"/>
<line x1="413" y1="183.3" x2="421.6" y2="183.3" stroke="#b4b4b4" stroke-width="0.7" />
<line x1="413" y1="185.60000000000002" x2="418" y2="185.60000000000002" stroke="#b4b4b4" stroke-width="0.7" />
<line x1="413" y1="187.9" x2="418" y2="187.9" stroke="#b4b4b4" stroke-width="0.7" />
<line x1="413" y1="190.20000000000002" x2="421.6" y2="190.20000000000002" stroke="#b4b4b4" stroke-width="0.7" />
<path d="M419.5 185.2 l2.2 1.6 l-2.2 1.6" fill="none" stroke="#b4b4b4" stroke-width="0.6"/>
<line x1="431" y1="183.3" x2="437" y2="183.3" stroke="#b4b4b4" stroke-width="0.7" />
<line x1="431" y1="185.60000000000002" x2="437" y2="185.60000000000002" stroke="#b4b4b4" stroke-width="0.7" />
<line x1="431" y1="187.9" x2="437" y2="187.9" stroke="#b4b4b4" stroke-width="0.7" />
<line x1="431" y1="190.20000000000002" x2="437" y2="190.20000000000002" stroke="#b4b4b4" stroke-width="0.7" />
<path d="M428.4 182.6 v8 M427.2 184 l1.2 -1.4 l1.2 1.4 M427.2 189.2 l1.2 1.4 l1.2 -1.4" fill="none" stroke="#b4b4b4" stroke-width="0.6"/>
<path d="M440.5 186.2 l1.5 1.5 l1.5 -1.5" fill="none" stroke="#5a5a5a" stroke-width="0.7"/>
<path d="M454.5 178.5 v9 M453 185.9 l1.5 1.6 l1.5 -1.6 M458.5 187.5 v-9 M457 180.1 l1.5 -1.6 l1.5 1.6" fill="none" stroke="#b4b4b4" stroke-width="0.7"/>
<path d="M464.5 181.79999999999998 l1.5 1.5 l1.5 -1.5" fill="none" stroke="#5a5a5a" stroke-width="0.7"/>
<line x1="351.5" y1="202.4" x2="360.5" y2="202.4" stroke="#b4b4b4" stroke-width="0.7" />
<line x1="351.5" y1="204.5" x2="357.5" y2="204.5" stroke="#b4b4b4" stroke-width="0.7" />
<line x1="351.5" y1="206.6" x2="360.5" y2="206.6" stroke="#b4b4b4" stroke-width="0.7" />
<line x1="351.5" y1="208.70000000000002" x2="357.5" y2="208.70000000000002" stroke="#b4b4b4" stroke-width="0.7" />
<line x1="365.8" y1="202.4" x2="374.8" y2="202.4" stroke="#b4b4b4" stroke-width="0.7" />
<line x1="367.3" y1="204.5" x2="373.3" y2="204.5" stroke="#b4b4b4" stroke-width="0.7" />
<line x1="365.8" y1="206.6" x2="374.8" y2="206.6" stroke="#b4b4b4" stroke-width="0.7" />
<line x1="367.3" y1="208.70000000000002" x2="373.3" y2="208.70000000000002" stroke="#b4b4b4" stroke-width="0.7" />
<line x1="380.5" y1="202.4" x2="389.5" y2="202.4" stroke="#b4b4b4" stroke-width="0.7" />
<line x1="383.5" y1="204.5" x2="389.5" y2="204.5" stroke="#b4b4b4" stroke-width="0.7" />
<line x1="380.5" y1="206.6" x2="389.5" y2="206.6" stroke="#b4b4b4" stroke-width="0.7" />
<line x1="383.5" y1="208.70000000000002" x2="389.5" y2="208.70000000000002" stroke="#b4b4b4" stroke-width="0.7" />
<line x1="395.5" y1="202.4" x2="404.5" y2="202.4" stroke="#b4b4b4" stroke-width="0.7" />
<line x1="395.5" y1="204.5" x2="404.5" y2="204.5" stroke="#b4b4b4" stroke-width="0.7" />
<line x1="395.5" y1="206.6" x2="404.5" y2="206.6" stroke="#b4b4b4" stroke-width="0.7" />
<line x1="395.5" y1="208.70000000000002" x2="404.5" y2="208.70000000000002" stroke="#b4b4b4" stroke-width="0.7" />
<line x1="408.2" y1="199" x2="408.2" y2="212" stroke="#555" stroke-width="0.7" />
<line x1="413.5" y1="203.4" x2="416.9" y2="203.4" stroke="#7a7a7a" stroke-width="0.7" />
<line x1="413.5" y1="205.5" x2="416.9" y2="205.5" stroke="#7a7a7a" stroke-width="0.7" />
<line x1="413.5" y1="207.6" x2="416.9" y2="207.6" stroke="#7a7a7a" stroke-width="0.7" />
<line x1="418.2" y1="203.4" x2="421.59999999999997" y2="203.4" stroke="#7a7a7a" stroke-width="0.7" />
<line x1="418.2" y1="205.5" x2="421.59999999999997" y2="205.5" stroke="#7a7a7a" stroke-width="0.7" />
<line x1="418.2" y1="207.6" x2="421.59999999999997" y2="207.6" stroke="#7a7a7a" stroke-width="0.7" />
<path d="M424.7 205.0 l1.5 1.5 l1.5 -1.5" fill="none" stroke="#5a5a5a" stroke-width="0.7"/>
<rect x="452.6" y="194.5" width="6.5" height="6.5" fill="none" stroke="#8a8a8a" stroke-width="0.7"/>
<path d="M455.8 193 v9.5" fill="none" stroke="#8a8a8a" stroke-width="0.6"/>
<path d="M464.5 197.2 l1.5 1.5 l1.5 -1.5" fill="none" stroke="#5a5a5a" stroke-width="0.7"/>
<path d="M452.6 209.5 h5 v5 h-5 Z M454.4 211 h5 v4.6 h-5" fill="none" stroke="#8a8a8a" stroke-width="0.7"/>
<path d="M464.5 211.6 l1.5 1.5 l1.5 -1.5" fill="none" stroke="#5a5a5a" stroke-width="0.7"/>
<text x="396.5" y="227.5" font-size="7.6" fill="#d6d6d6" font-weight="bold" textLength="19.3" lengthAdjust="spacingAndGlyphs">Абзац</text>
<path d="M471 223 h3.5 M471 223 v3.5 M472.3 224.3 l2.2 2.2 M474.5 224.6 v2.1 h-2.1" fill="none" stroke="#6a6a6a" stroke-width="0.6"/>
<rect x="485.3" y="178.6" width="9.6" height="9.6" fill="#1a6ad0"/>
<circle cx="496.3" cy="189.6" r="5.2" fill="#272628" stroke="#d0d0d0" stroke-width="0.9"/>
<text x="482.6" y="205" font-size="7.6" fill="#d6d6d6" font-weight="bold" textLength="21.4" lengthAdjust="spacingAndGlyphs">Фігури</text>
<path d="M492.09999999999997 210.79999999999998 l1.6 1.6 l1.6 -1.6 Z" fill="#e0e0e0"/>
<rect x="521.8" y="178.6" width="7" height="7" fill="none" stroke="#c8c8c8" stroke-width="0.8"/>
<rect x="525" y="182.4" width="8" height="8" fill="#e6a23c"/>
<rect x="530.6" y="188.2" width="6.8" height="6.8" fill="#272628" stroke="#c8c8c8" stroke-width="0.8"/>
<text x="508.2" y="205" font-size="7.6" fill="#d6d6d6" font-weight="bold" textLength="43.2" lengthAdjust="spacingAndGlyphs">Упорядкувати</text>
<path d="M527.6999999999999 210.79999999999998 l1.6 1.6 l1.6 -1.6 Z" fill="#e0e0e0"/>
<rect x="562.8" y="179" width="15.5" height="15.5" fill="none" stroke="#777" stroke-width="0.9"/>
<path d="M578.8 184.5 l-7 8.5 l-2.6 1.6 l0.8 -3 l7 -8.5" fill="#272628" stroke="#8a8a8a" stroke-width="0.8"/>
<text x="555.5" y="205" font-size="7.6" fill="#5c5c5c" textLength="27.5" lengthAdjust="spacingAndGlyphs">Експрес-</text>
<text x="558.7" y="214" font-size="7.6" fill="#5c5c5c" textLength="15.3" lengthAdjust="spacingAndGlyphs">стилі</text>
<path d="M576.7 210.6 l1.5 1.5 l1.5 -1.5" fill="none" stroke="#4a4a4a" stroke-width="0.7"/>
<text x="600.3" y="185.7" font-size="7.6" fill="#5c5c5c" textLength="48.9" lengthAdjust="spacingAndGlyphs">Заливка фігури</text>
<path d="M651.1 182.39999999999998 l1.5 1.5 l1.5 -1.5" fill="none" stroke="#4a4a4a" stroke-width="0.7"/>
<text x="600.3" y="200.29999999999998" font-size="7.6" fill="#5c5c5c" textLength="45.1" lengthAdjust="spacingAndGlyphs">Контур фігури</text>
<path d="M647.5 196.99999999999997 l1.5 1.5 l1.5 -1.5" fill="none" stroke="#4a4a4a" stroke-width="0.7"/>
<text x="600.3" y="215.39999999999998" font-size="7.6" fill="#5c5c5c" textLength="53.7" lengthAdjust="spacingAndGlyphs">Ефекти для фігур</text>
<path d="M656.5 212.09999999999997 l1.5 1.5 l1.5 -1.5" fill="none" stroke="#4a4a4a" stroke-width="0.7"/>
<path d="M590 184 l3 -3.6 l3 3.6 l-3 2 Z" fill="none" stroke="#7a7a7a" stroke-width="0.7"/>
<rect x="589" y="187.2" width="8.4" height="1.5" fill="#6a6a6a"/>
<rect x="589.4" y="194.2" width="7.4" height="6" fill="none" stroke="#7a7a7a" stroke-width="0.7"/>
<path d="M592 199 l5 -5.5" fill="none" stroke="#8a8a8a" stroke-width="1"/>
<rect x="589" y="201.6" width="8.4" height="1.3" fill="#6a6a6a"/>
<path d="M590 212 l4 -2.6 l4 1.4 l-4 2.6 Z M590 212 v2.6 l4 1.4 v-2.6 M594 216 l4 -2.6 v-2.6" fill="none" stroke="#8a8a8a" stroke-width="0.7"/>
<text x="551.4" y="227.5" font-size="7.6" fill="#d6d6d6" font-weight="bold" textLength="35.6" lengthAdjust="spacingAndGlyphs">Малювання</text>
<path d="M665 223 h3.5 M665 223 v3.5 M666.3 224.3 l2.2 2.2 M668.5 224.6 v2.1 h-2.1" fill="none" stroke="#6a6a6a" stroke-width="0.6"/>
<circle cx="683" cy="182" r="2.6" fill="none" stroke="#d8d8d8" stroke-width="0.8"/>
<line x1="681.2" y1="184" x2="678.8" y2="186.6" stroke="#d8d8d8" stroke-width="0.8" />
<text x="688.6" y="185.7" font-size="7.6" fill="#d6d6d6" font-weight="bold" textLength="23.1" lengthAdjust="spacingAndGlyphs">Знайти</text>
<text x="678" y="197" font-size="5" fill="#d06ad0">b</text>
<text x="681.6" y="201.6" font-size="5" fill="#4a90d8">c</text>
<path d="M678.2 198.5 a2.4 2.4 0 0 0 2.4 2.6" fill="none" stroke="#bdbdbd" stroke-width="0.6"/>
<text x="688.6" y="200.3" font-size="7.6" fill="#d6d6d6" font-weight="bold" textLength="29.1" lengthAdjust="spacingAndGlyphs">Замінити</text>
<path d="M724.9 197.0 l1.6 1.6 l1.6 -1.6 Z" fill="#bdbdbd"/>
<path d="M679.4 208.8 v7.4 l2 -1.8 l1.4 2.8 l1.1 -0.5 l-1.3 -2.7 h2.6 Z" fill="none" stroke="#d8d8d8" stroke-width="0.7"/>
<text x="688.6" y="215.4" font-size="7.6" fill="#d6d6d6" font-weight="bold" textLength="27.8" lengthAdjust="spacingAndGlyphs">Виділити</text>
<path d="M718.8 212.1 l1.6 1.6 l1.6 -1.6 Z" fill="#bdbdbd"/>
<text x="684.9" y="227.5" font-size="7.6" fill="#d6d6d6" font-weight="bold" textLength="37.5" lengthAdjust="spacingAndGlyphs">Редагування</text>
<rect x="752.2" y="179" width="7" height="7" fill="none" stroke="#d35230" stroke-width="1"/>
<rect x="752.2" y="187.6" width="7" height="7" fill="none" stroke="#d35230" stroke-width="1"/>
<rect x="760.8" y="179" width="7" height="7" fill="none" stroke="#d35230" stroke-width="1"/>
<rect x="760.8" y="187.6" width="7" height="7" fill="none" stroke="#d35230" stroke-width="1"/>
<text x="743.2" y="205" font-size="7.6" fill="#d6d6d6" font-weight="bold" textLength="33.8" lengthAdjust="spacingAndGlyphs">Надбудови</text>
<text x="743.2" y="227.5" font-size="7.6" fill="#d6d6d6" font-weight="bold" textLength="33.8" lengthAdjust="spacingAndGlyphs">Надбудови</text>
<path d="M806 221.5 l2.6 2.6 l2.6 -2.6" fill="none" stroke="#d8d8d8" stroke-width="0.9"/>
</g>
<g clip-path="url(#ppclip)">
<line x1="134.5" y1="233" x2="134.5" y2="545" stroke="#2c2c2c" stroke-width="1" />
<line x1="134.5" y1="544.6" x2="811" y2="544.6" stroke="#2c2c2c" stroke-width="1" />
<line x1="811.5" y1="233" x2="811.5" y2="545" stroke="#242424" stroke-width="1" />
<path d="M124.7 237 l2.7 -3.6 l2.7 3.6 Z" fill="#a8a8a8"/>
<path d="M124.7 539.2 l2.7 3.6 l2.7 -3.6 Z" fill="#a8a8a8"/>
<rect x="124.8" y="240.2" width="5.2" height="76.5" fill="#8e8e8e" rx="2.6"/>
<g filter="url(#b05)">
<text x="12.3" y="247.7" font-size="9.5" fill="#e4e4e4">1</text>
<text x="12.3" y="307" font-size="9.5" fill="#e4e4e4">2</text>
<text x="12.3" y="366.5" font-size="9.5" fill="#e4e4e4">3</text>
<text x="12.3" y="426.5" font-size="9.5" fill="#e4e4e4">4</text>
<text x="12.3" y="486" font-size="9.5" fill="#e4e4e4">5</text>
<text x="12.3" y="545.8" font-size="9.5" fill="#e4e4e4">6</text>
</g>
<rect x="24.5" y="239.9" width="87.3" height="50.8" fill="#fbe4d8" rx="3" stroke="#e48c68" stroke-width="0.9"/>
<g filter="url(#b05)">
<rect x="26" y="241.6" width="84" height="47.6" fill="url(#slidebg)" rx="1.5"/>
<rect x="26" y="241.6" width="32" height="47.6" fill="url(#water)"/>
<rect x="26" y="241.6" width="32" height="9" fill="#6ac8ea" opacity="0.5"/>
<path d="M37 261 h11 l-5.4 2 Z" fill="#d8f0f8" opacity="0.8"/>
<rect x="42.2" y="246" width="1.2" height="14" fill="#bfe6f5" opacity="0.45"/>
<rect x="41.6" y="263.6" width="2" height="3.2" fill="#d4e4ec"/>
<rect x="41.6" y="266.2" width="2" height="2" fill="#1a2640"/>
<rect x="42.2" y="268" width="1.1" height="3" fill="#e0e8ee"/>
<rect x="62" y="253.2" width="27" height="1.3" fill="#4a6ab0" opacity="0.7"/>
<rect x="62.4" y="260.9" width="23" height="1.9" fill="#1a1a1a" opacity="0.62"/>
<rect x="62.4" y="264.4" width="39" height="1.9" fill="#1a1a1a" opacity="0.62"/>
<rect x="62.4" y="267.9" width="26" height="1.9" fill="#1a1a1a" opacity="0.62"/>
<rect x="62.4" y="271.4" width="37" height="1.9" fill="#1a1a1a" opacity="0.62"/>
<rect x="63" y="278" width="13" height="0.8" fill="#333" opacity="0.55"/>
<rect x="63" y="280" width="20" height="1.1" fill="#111" opacity="0.7"/>
<rect x="63" y="282.6" width="32" height="0.7" fill="#555" opacity="0.5"/>
<rect x="63" y="284.20000000000005" width="33" height="0.7" fill="#555" opacity="0.5"/>
<rect x="63" y="285.8" width="19" height="0.7" fill="#555" opacity="0.5"/>
<rect x="98" y="278.5" width="12" height="10.5" fill="#fdfdfd"/>
<circle cx="104" cy="284.6" r="2.7" fill="#7a9ad8" stroke="#d89098" stroke-width="0.8"/>
<rect x="26" y="301.4" width="84" height="47.6" fill="url(#slidebg)" rx="1.5"/>
<rect x="26" y="301.4" width="31.6" height="47.6" fill="url(#pool)"/>
<rect x="26" y="301.4" width="31.6" height="14" fill="#dfe6ea"/>
<rect x="26" y="313.4" width="31.6" height="5" fill="#b8c4cc" opacity="0.8"/>
<circle cx="52.5" cy="320" r="2.6" fill="#3a3436"/>
<circle cx="36" cy="330" r="3.4" fill="#3a3436"/>
<circle cx="30" cy="337" r="3" fill="#3a3436"/>
<circle cx="47" cy="324" r="2" fill="#3a3436"/>
<circle cx="54" cy="331" r="2.4" fill="#3a3436"/>
<rect x="51" y="314.5" width="3" height="9" fill="#2a2c34"/>
<path d="M28 347 l10 -12 l6 4 l-4 9 Z" fill="#3b3a40"/>
<rect x="61.5" y="308" width="35" height="1.3" fill="#222" opacity="0.85"/>
<rect x="61.8" y="312.5" width="1.6" height="1.6" fill="#3a78b8"/>
<rect x="64.5" y="312.5" width="42" height="0.7" fill="#666" opacity="0.55"/>
<rect x="64.5" y="314.25" width="38" height="0.7" fill="#666" opacity="0.55"/>
<rect x="64.5" y="316.0" width="42" height="0.7" fill="#666" opacity="0.55"/>
<rect x="64.5" y="317.75" width="38" height="0.7" fill="#666" opacity="0.55"/>
<rect x="61.8" y="321" width="1.6" height="1.6" fill="#3a78b8"/>
<rect x="64.5" y="321.0" width="42" height="0.7" fill="#666" opacity="0.55"/>
<rect x="64.5" y="322.75" width="38" height="0.7" fill="#666" opacity="0.55"/>
<rect x="64.5" y="324.5" width="42" height="0.7" fill="#666" opacity="0.55"/>
<rect x="64.5" y="326.25" width="38" height="0.7" fill="#666" opacity="0.55"/>
<rect x="61.8" y="334" width="1.6" height="1.6" fill="#3a78b8"/>
<rect x="64.5" y="334.0" width="42" height="0.7" fill="#666" opacity="0.55"/>
<rect x="64.5" y="335.75" width="38" height="0.7" fill="#666" opacity="0.55"/>
<rect x="64.5" y="337.5" width="42" height="0.7" fill="#666" opacity="0.55"/>
<rect x="64.5" y="339.25" width="38" height="0.7" fill="#666" opacity="0.55"/>
<rect x="64.5" y="328.5" width="41" height="0.7" fill="#666" opacity="0.55"/>
<rect x="64.5" y="330.25" width="41" height="0.7" fill="#666" opacity="0.55"/>
<rect x="64.5" y="332.0" width="41" height="0.7" fill="#666" opacity="0.55"/>
<circle cx="103.8" cy="345" r="2.4" fill="#b8c8ea" stroke="#8a78b0" stroke-width="0.6"/>
<rect x="26" y="361" width="84" height="47.6" fill="url(#slidebg)" rx="1.5"/>
<rect x="78.4" y="361" width="31.6" height="47.6" fill="url(#lab)"/>
<rect x="26" y="385" width="52.4" height="23.6" fill="#e3f0f8" opacity="0.8"/>
<path d="M78.4 408.6 v-8 l8 -4 l8 2 l15.6 -2 v12 Z" fill="#aeb8c2" opacity="0.8"/>
<circle cx="81.5" cy="383" r="2.8" fill="#c89a78"/>
<path d="M78.4 386 l5 1 l4 8 l-3 8 l-6 3 Z" fill="#2e3a4c"/>
<path d="M92 398 l3 -10 l8 0 l-2 10 Z" fill="#c8ccd4"/>
<rect x="32" y="369.5" width="29" height="1.5" fill="#222" opacity="0.85"/>
<rect x="32" y="374.1" width="38" height="1.5" fill="#222" opacity="0.85"/>
<rect x="32" y="378.7" width="14" height="1.5" fill="#222" opacity="0.85"/>
<rect x="31.5" y="386.5" width="44" height="0.7" fill="#667" opacity="0.5"/>
<rect x="31.5" y="388.4" width="44" height="0.7" fill="#667" opacity="0.5"/>
<rect x="31.5" y="390.3" width="44" height="0.7" fill="#667" opacity="0.5"/>
<rect x="31.5" y="392.2" width="44" height="0.7" fill="#667" opacity="0.5"/>
<rect x="31.5" y="394.1" width="44" height="0.7" fill="#667" opacity="0.5"/>
<rect x="31.5" y="396.0" width="44" height="0.7" fill="#667" opacity="0.5"/>
<rect x="31.5" y="397.9" width="44" height="0.7" fill="#667" opacity="0.5"/>
<rect x="31.5" y="399.8" width="44" height="0.7" fill="#667" opacity="0.5"/>
<rect x="31.5" y="401.7" width="30" height="0.7" fill="#667" opacity="0.5"/>
<rect x="26" y="420.8" width="84" height="47.6" fill="#edf3f8" rx="1.5"/>
<rect x="28.6" y="423.3" width="36" height="9" fill="#d4ebf8" stroke="#a8cce0" stroke-width="0.5"/>
<rect x="28.6" y="436.5" width="36" height="20.5" fill="#d4ebf8" stroke="#a8cce0" stroke-width="0.5"/>
<rect x="67.5" y="421.8" width="42" height="44.5" fill="#d4ebf8" stroke="#a8cce0" stroke-width="0.5"/>
<rect x="32" y="425" width="16" height="0.9" fill="#234" opacity="0.7"/>
<rect x="32" y="428" width="20" height="0.7" fill="#567" opacity="0.5"/>
<rect x="36" y="438.6" width="20" height="0.9" fill="#234" opacity="0.7"/>
<rect x="30.5" y="443.0" width="32" height="0.7" fill="#567" opacity="0.45"/>
<rect x="30.5" y="444.8" width="32" height="0.7" fill="#567" opacity="0.45"/>
<rect x="30.5" y="446.6" width="32" height="0.7" fill="#567" opacity="0.45"/>
<rect x="30.5" y="448.4" width="32" height="0.7" fill="#567" opacity="0.45"/>
<rect x="30.5" y="450.2" width="32" height="0.7" fill="#567" opacity="0.45"/>
<rect x="30.5" y="452.0" width="32" height="0.7" fill="#567" opacity="0.45"/>
<rect x="74" y="423.4" width="24" height="0.9" fill="#234" opacity="0.7"/>
<rect x="74" y="432.4" width="28" height="0.9" fill="#234" opacity="0.7"/>
<rect x="69.5" y="426.0" width="30" height="0.7" fill="#567" opacity="0.45"/>
<rect x="69.5" y="428.1" width="38" height="0.7" fill="#567" opacity="0.45"/>
<rect x="69.5" y="430.2" width="38" height="0.7" fill="#567" opacity="0.45"/>
<rect x="69.5" y="432.3" width="30" height="0.7" fill="#567" opacity="0.45"/>
<rect x="69.5" y="436.5" width="38" height="0.7" fill="#567" opacity="0.45"/>
<rect x="69.5" y="438.6" width="30" height="0.7" fill="#567" opacity="0.45"/>
<rect x="69.5" y="440.7" width="38" height="0.7" fill="#567" opacity="0.45"/>
<rect x="69.5" y="442.8" width="38" height="0.7" fill="#567" opacity="0.45"/>
<rect x="69.5" y="444.9" width="30" height="0.7" fill="#567" opacity="0.45"/>
<rect x="69.5" y="447.0" width="38" height="0.7" fill="#567" opacity="0.45"/>
<rect x="69.5" y="449.1" width="38" height="0.7" fill="#567" opacity="0.45"/>
<rect x="69.5" y="451.2" width="30" height="0.7" fill="#567" opacity="0.45"/>
<rect x="69.5" y="453.3" width="38" height="0.7" fill="#567" opacity="0.45"/>
<rect x="69.5" y="455.4" width="38" height="0.7" fill="#567" opacity="0.45"/>
<rect x="69.5" y="457.5" width="30" height="0.7" fill="#567" opacity="0.45"/>
<rect x="69.5" y="459.6" width="38" height="0.7" fill="#567" opacity="0.45"/>
<rect x="69.5" y="461.7" width="38" height="0.7" fill="#567" opacity="0.45"/>
<circle cx="104.5" cy="464.5" r="2" fill="#b8c8ea" stroke="#8a78b0" stroke-width="0.5"/>
<rect x="26" y="480.4" width="84" height="47.6" fill="url(#slidebg)" rx="1.5"/>
<rect x="26" y="490.4" width="52" height="37.6" fill="#e2f0f8" opacity="0.7"/>
<rect x="77.6" y="480.4" width="32.4" height="47.6" fill="#dde7ec"/>
<path d="M90 528 l1 -20 l5 -8 l6 -1 l5 8 l3 21 Z" fill="#e9eef2"/>
<path d="M96 492 c0 -5 8 -5 9 0 l1 12 l-4 -3 l-4 2 Z" fill="#2e2a2c"/>
<circle cx="99.6" cy="495.5" r="2.6" fill="#d4a88c"/>
<path d="M82 512 l3 -12 l3 0 l1 12 Z M80 518 h12 v3 h-12 Z" fill="#4a4e54"/>
<rect x="84" y="522" width="24" height="3" fill="#58b4e0" opacity="0.8"/>
<rect x="30.5" y="487.6" width="24" height="1.4" fill="#222" opacity="0.85"/>
<rect x="32.5" y="497.5" width="1.3" height="1.3" fill="#3a9ad8"/>
<rect x="37.5" y="495.5" width="30" height="0.8" fill="#333" opacity="0.7"/>
<rect x="37.5" y="497.5" width="32" height="0.7" fill="#667" opacity="0.45"/>
<rect x="37.5" y="499.3" width="32" height="0.7" fill="#667" opacity="0.45"/>
<rect x="37.5" y="501.1" width="32" height="0.7" fill="#667" opacity="0.45"/>
<rect x="32.5" y="509.5" width="1.3" height="1.3" fill="#3a9ad8"/>
<rect x="37.5" y="507.5" width="30" height="0.8" fill="#333" opacity="0.7"/>
<rect x="37.5" y="509.5" width="32" height="0.7" fill="#667" opacity="0.45"/>
<rect x="37.5" y="511.3" width="32" height="0.7" fill="#667" opacity="0.45"/>
<rect x="37.5" y="513.1" width="32" height="0.7" fill="#667" opacity="0.45"/>
<rect x="32.5" y="520.5" width="1.3" height="1.3" fill="#3a9ad8"/>
<rect x="37.5" y="518.5" width="30" height="0.8" fill="#333" opacity="0.7"/>
<rect x="37.5" y="520.5" width="32" height="0.7" fill="#667" opacity="0.45"/>
<rect x="37.5" y="522.3" width="32" height="0.7" fill="#667" opacity="0.45"/>
<rect x="37.5" y="524.1" width="32" height="0.7" fill="#667" opacity="0.45"/>
<rect x="26" y="540.2" width="84" height="8" fill="#f6f7f9" rx="1.5"/>
</g>
<rect x="6" y="546.2" width="816" height="12.2" fill="#0c0c0d"/>
<line x1="6" y1="546" x2="822" y2="546" stroke="#222" stroke-width="0.7" />
</g>
<g filter="url(#b05)">
<text x="12.5" y="555" font-size="7.2" fill="#d0d0d0" font-weight="bold" textLength="36.5" lengthAdjust="spacingAndGlyphs">Слайд 1 з 20</text>
<text x="67.8" y="555" font-size="7.2" fill="#d0d0d0" font-weight="bold" textLength="29.5" lengthAdjust="spacingAndGlyphs">російська</text>
<circle cx="111.3" cy="549.3" r="1" fill="none" stroke="#d0d0d0" stroke-width="0.6"/>
<path d="M108 551 h6.6 M111.3 551 v2.4 l-2 3 M111.3 553.4 l2 3" fill="none" stroke="#d0d0d0" stroke-width="0.7"/>
<text x="117.7" y="555" font-size="7.2" fill="#d0d0d0" font-weight="bold" textLength="109.7" lengthAdjust="spacingAndGlyphs">Спеціальні можливості: щось не так</text>
<line x1="513.5" y1="550.8" x2="522.1" y2="550.8" stroke="#d0d0d0" stroke-width="0.8" />
<line x1="513.5" y1="553.0" x2="522.1" y2="553.0" stroke="#d0d0d0" stroke-width="0.8" />
<line x1="513.5" y1="555.1999999999999" x2="522.1" y2="555.1999999999999" stroke="#d0d0d0" stroke-width="0.8" />
<path d="M516 549 l1.8 -1.6 l1.8 1.6" fill="none" stroke="#d0d0d0" stroke-width="0.6"/>
<text x="523.7" y="555" font-size="7.2" fill="#d0d0d0" font-weight="bold" textLength="25.3" lengthAdjust="spacingAndGlyphs">Нотатки</text>
<path d="M560.5 547.8 h7.6 v5.4 h-4.4 l-1.8 2 v-2 h-1.4 Z" fill="none" stroke="#d0d0d0" stroke-width="0.8"/>
<text x="570" y="555" font-size="7.2" fill="#d0d0d0" font-weight="bold" textLength="29.2" lengthAdjust="spacingAndGlyphs">Примітки</text>
<rect x="610.5" y="545.8" width="23" height="12.4" fill="#2b2b2b"/>
<rect x="617.6" y="548.8" width="7.8" height="6.6" fill="none" stroke="#e8e8e8" stroke-width="0.8"/>
<rect x="619.8" y="550.2" width="3.8" height="2.4" fill="none" stroke="#e8e8e8" stroke-width="0.6"/>
<line x1="619.4" y1="548.8" x2="619.4" y2="555.4" stroke="#e8e8e8" stroke-width="0.5" />
<rect x="640.8" y="548.4" width="2.9" height="2.9" fill="none" stroke="#d0d0d0" stroke-width="0.7"/>
<rect x="640.8" y="553" width="2.9" height="2.9" fill="none" stroke="#d0d0d0" stroke-width="0.7"/>
<rect x="645.6" y="548.4" width="2.9" height="2.9" fill="none" stroke="#d0d0d0" stroke-width="0.7"/>
<rect x="645.6" y="553" width="2.9" height="2.9" fill="none" stroke="#d0d0d0" stroke-width="0.7"/>
<path d="M663.2 548.6 h7.6 v6 l-3.8 1.4 l-3.8 -1.4 Z M667 549 v7" fill="none" stroke="#d0d0d0" stroke-width="0.8"/>
<path d="M685.8 548.4 h7.6 M686.6 548.4 v4 h6 v-4 M689.6 552.4 v2.6 M687.6 555.6 h4" fill="none" stroke="#d0d0d0" stroke-width="0.8"/>
<line x1="705" y1="552.5" x2="709" y2="552.5" stroke="#9a9a9a" stroke-width="0.7" />
<line x1="712.7" y1="552.5" x2="769.8" y2="552.5" stroke="#9a9a9a" stroke-width="0.7" />
<line x1="742" y1="551" x2="742" y2="554" stroke="#9a9a9a" stroke-width="0.7" />
<rect x="728.4" y="548.8" width="2.2" height="7.2" fill="#c8c8c8"/>
<path d="M772.8 552.5 h4 M774.8 550.5 v4" fill="none" stroke="#9a9a9a" stroke-width="0.7"/>
<text x="784.3" y="555" font-size="7.2" fill="#d0d0d0" font-weight="bold" textLength="11.7" lengthAdjust="spacingAndGlyphs">61%</text>
<rect x="806.2" y="550.6" width="3.8" height="3.8" fill="none" stroke="#d0d0d0" stroke-width="0.7"/>
<path d="M808.1 547.6 v1.8 M808.1 555.6 v1.8 M803.4 552.5 h1.8 M811 552.5 h1.8 M807.1 548.4 l1 -1 l1 1 M807.1 556.6 l1 1 l1 -1 M804.2 551.5 l-1 1 l1 1 M812 551.5 l1 1 l-1 1" fill="none" stroke="#d0d0d0" stroke-width="0.6"/>
</g>
<path d="M814.6 237.2 l2.2 -2.8 l2.2 2.8 Z" fill="#9a9a9a"/>
<rect x="814.6" y="239.6" width="4.2" height="13.8" fill="#a4a4a4" rx="2"/>
<path d="M814.6 506.6 l2.2 2.8 l2.2 -2.8 Z" fill="#9a9a9a"/>
<path d="M814.6 518 l2.2 -2.6 l2.2 2.6 Z M814.6 521 l2.2 -2.6 l2.2 2.6 Z" fill="#9a9a9a"/>
<path d="M814.6 524.4 l2.2 2.6 l2.2 -2.6 Z M814.6 527.4 l2.2 2.6 l2.2 -2.6 Z" fill="#9a9a9a"/>
</svg>
<svg id="slide" class="layer" width="1364" height="695" viewBox="0 0 1364 695" >
<rect x="207" y="236" width="533" height="300.2" fill="url(#slidebg2)"/>
<g clip-path="url(#photoclip)">
<rect x="207" y="236" width="199.5" height="300.2" fill="url(#water2)"/>
<g mask="url(#wmask)">
<rect x="207" y="236" width="199.5" height="300.2" fill="#fff" filter="url(#waves)"/>
<rect x="207" y="236" width="199.5" height="300.2" fill="#fff" filter="url(#waves2)" opacity="0.8"/>
</g>
<g filter="url(#b6)">
<ellipse cx="398" cy="300" rx="24" ry="60" fill="#145fae" opacity="0.5"/>
<ellipse cx="404" cy="410" rx="22" ry="45" fill="#12509c" opacity="0.5"/>
<ellipse cx="208" cy="415" rx="18" ry="40" fill="#12509c" opacity="0.4"/>
<ellipse cx="360" cy="262" rx="40" ry="10" fill="#1668b4" opacity="0.5"/>
<ellipse cx="350" cy="318" rx="50" ry="8" fill="#1668b4" opacity="0.45"/>
<ellipse cx="240" cy="265" rx="45" ry="22" fill="#45b6e0" opacity="0.55"/>
<ellipse cx="310" cy="470" rx="80" ry="22" fill="#38b0de" opacity="0.45"/>
<ellipse cx="312" cy="350" rx="50" ry="14" fill="#2a98d2" opacity="0.5"/>
</g>
<g filter="url(#b2)">
<ellipse cx="262" cy="239.5" rx="36" ry="4.2" fill="#f6e8d6" opacity="0.95"/>
<ellipse cx="214" cy="256" rx="3" ry="3" fill="#a8dcf2" opacity="0.8"/>
<ellipse cx="224" cy="259" rx="3" ry="2.5" fill="#a8dcf2" opacity="0.6"/>
<ellipse cx="315" cy="262" rx="8" ry="14" fill="#7cc8ea" opacity="0.6"/>
<ellipse cx="313" cy="305" rx="9" ry="4" fill="#c4e4f0" opacity="0.75"/>
<ellipse cx="313" cy="330" rx="7" ry="5" fill="#c4e6f2" opacity="0.7"/>
<ellipse cx="303" cy="292" rx="4" ry="3" fill="#35506a" opacity="0.5"/>
<ellipse cx="313" cy="348" rx="4" ry="8" fill="#9cd4ec" opacity="0.5"/>
</g>
<g filter="url(#b1)">
<path d="M266 357.5 C290 356 330 357.5 357.5 355 C345 359 330 361 322 365 L316 374 L310 366 L306 374 C303 366 296 362 266 357.5 Z" fill="#def2f8" opacity="0.72"/>
</g>
<g filter="url(#b05)">
<circle cx="311" cy="382" r="3.7" fill="#2c3440"/>
<path d="M302.5 387.5 C306 385.5 316 385.5 320.5 387.5 L321.5 401 L301.5 401 Z" fill="#c6d6e0"/>
<path d="M302.5 388 L286 393 L281 394.6 L282 396.4 L287 396 L302.5 392.5 Z" fill="#aec6d4"/>
<path d="M320.5 388 L336 392.5 L341.5 394.2 L340.6 396.2 L335 395.6 L320.5 392.5 Z" fill="#aec6d4"/>
<path d="M301.2 400.5 L322 400.5 L322 411 L318 415 L309 415.5 L302.5 412 Z" fill="#1a2040"/>
<path d="M311 410 C314 407.5 318.5 408 320 410 L319 422 L318.5 431 L313 431 L312.5 421 Z" fill="#d4e2ea"/>
<path d="M313.6 429 L319.2 429 L319 435.5 L313.5 437.5 L311.4 435.5 Z" fill="#e8f0f4"/>
</g>
</g>
<g filter="url(#b05)" opacity="0.96">
<text x="438" y="316.3" font-size="16.5" fill="#4769ae" font-weight="bold" font-family='"Liberation Serif",serif' textLength="170.6" lengthAdjust="spacingAndGlyphs">Губар Іван Вікторович</text>
<path d="M438 319 q1.2 -1.6 2.4 0 t2.4 0 t2.4 0 t2.4 0 t2.4 0 t2.4 0 t2.4 0 t2.4 0 t2.4 0 t2.4 0 t2.4 0 t2.4 0 t2.4 0 t2.4 0 t2.4 0 t2.4 0 t2.4 0 t2.4 0" fill="none" stroke="#e03030" stroke-width="0.7"/>
<text x="439.8" y="370.8" font-size="17" fill="#111" font-weight="bold" font-family='"Liberation Serif",serif' textLength="159.1" lengthAdjust="spacingAndGlyphs" stroke="#111" stroke-width="0.35">ВДОСКОНАЛЕННЯ</text>
<text x="439.8" y="392.7" font-size="17" fill="#111" font-weight="bold" font-family='"Liberation Serif",serif' textLength="245.9" lengthAdjust="spacingAndGlyphs" stroke="#111" stroke-width="0.35">ТЕОРЕТИЧНОЇ ПІДГОТОВКИ</text>
<text x="439.8" y="415.3" font-size="17" fill="#111" font-weight="bold" font-family='"Liberation Serif",serif' textLength="165.4" lengthAdjust="spacingAndGlyphs" stroke="#111" stroke-width="0.35">ПЛАВЦІВ НА ЕТАПІ</text>
<text x="439.8" y="438" font-size="17" fill="#111" font-weight="bold" font-family='"Liberation Serif",serif' textLength="236.0" lengthAdjust="spacingAndGlyphs" stroke="#111" stroke-width="0.35">ПОЧАТКОВОЇ ПІДГОТОВКИ</text>
<text x="444.8" y="470.8" font-size="9.6" fill="#111" font-family='"Liberation Serif",serif' textLength="79.8" lengthAdjust="spacingAndGlyphs">Науковий керівник :</text>
<text x="444.8" y="482" font-size="9.6" fill="#111" font-weight="bold" font-style="italic" font-family='"Liberation Serif",serif' textLength="127.5" lengthAdjust="spacingAndGlyphs">Богуславська Вікторія Юріївна</text>
<text x="444.8" y="492.6" font-size="9.6" fill="#111" font-family='"Liberation Serif",serif' textLength="137.6" lengthAdjust="spacingAndGlyphs">доктор наук з фізичного виховання</text>
<text x="444.8" y="503.9" font-size="9.6" fill="#111" font-family='"Liberation Serif",serif' textLength="212.2" lengthAdjust="spacingAndGlyphs">та спорту, професор кафедри теорії і методики спорту</text>
<text x="444.8" y="515.1" font-size="9.6" fill="#111" font-family='"Liberation Serif",serif' textLength="208.4" lengthAdjust="spacingAndGlyphs">Вінницького державного педагогічного університету</text>
<text x="444.8" y="526.3" font-size="9.6" fill="#111" font-family='"Liberation Serif",serif' textLength="122.6" lengthAdjust="spacingAndGlyphs">імені Михайла Коцюбинського</text>
</g>
<rect x="662.8" y="484" width="77.2" height="52.2" fill="#fefefe"/>
<g filter="url(#b05)">
<text font-size="3" font-weight="bold" fill="#d85a5a" letter-spacing="0"><textPath href="#logoarc">ВІННИЦЬКИЙ ДЕРЖАВНИЙ ПЕДАГОГІЧНИЙ УНІВЕРСИТЕТ ІМЕНІ МИХАЙЛА КОЦЮБИНСЬКОГО</textPath></text>
<g clip-path="url(#logoclip)">
<circle cx="701.3" cy="509.2" r="16.4" fill="#2b8ed2"/>
<rect x="684" y="517.5" width="35" height="10" fill="#62b84a"/>
<path d="M684 521 L692 512 L694 521 Z M718.6 521 L710.6 512 L708.6 521 Z" fill="#2b8ed2"/>
<rect x="688" y="495.5" width="26.6" height="11" fill="#e6e4f4"/>
<rect x="694.5" y="494" width="13.6" height="13.5" fill="#f0eefa"/>
<line x1="689.5" y1="497" x2="689.5" y2="506.5" stroke="#5a4aa8" stroke-width="1" />
<line x1="692.5" y1="497" x2="692.5" y2="506.5" stroke="#5a4aa8" stroke-width="1" />
<line x1="695.5" y1="497" x2="695.5" y2="506.5" stroke="#5a4aa8" stroke-width="1" />
<line x1="698.5" y1="497" x2="698.5" y2="506.5" stroke="#5a4aa8" stroke-width="1" />
<line x1="701.5" y1="497" x2="701.5" y2="506.5" stroke="#5a4aa8" stroke-width="1" />
<line x1="704.5" y1="497" x2="704.5" y2="506.5" stroke="#5a4aa8" stroke-width="1" />
<line x1="707.5" y1="497" x2="707.5" y2="506.5" stroke="#5a4aa8" stroke-width="1" />
<line x1="710.5" y1="497" x2="710.5" y2="506.5" stroke="#5a4aa8" stroke-width="1" />
<line x1="713.5" y1="497" x2="713.5" y2="506.5" stroke="#5a4aa8" stroke-width="1" />
<line x1="688" y1="499.5" x2="714.6" y2="499.5" stroke="#8a80c8" stroke-width="0.6" />
<rect x="695" y="503.5" width="12.6" height="3.5" fill="#3a2a90"/>
<path d="M690.8 519.2 L697.4 510.6 L705.2 510.6 L711.8 519.2 Q706.5 517.8 701.3 519.6 Q696 517.8 690.8 519.2 Z" fill="#ffffff"/>
<text x="701.3" y="516.4" font-size="4.2" fill="#d04848" font-weight="bold" font-family='"Liberation Serif",serif' text-anchor="middle">1912</text>
<path d="M694 523.6 l2 -2.4 l1 2.4 l1.6 -2.4 l1 2.4 M702.6 523.6 l1 -2.4 l1.6 2.4 l1 -2.4 l2 2.4" fill="none" stroke="#c8ec6a" stroke-width="0.9"/>
</g>
</g>
<path d="M168.5 250.2 v9.8 l2.3 -2.2 l1.7 3.8 l1.5 -0.7 l-1.7 -3.7 h3.1 Z" fill="#fff" stroke="#222" stroke-width="0.6"/>
<circle cx="436.2" cy="504" r="5" fill="none" stroke="#fff" stroke-width="1" opacity="0.75"/>
</svg>
<svg id="video" class="layer" width="1364" height="695" viewBox="0 0 1364 695" >
<g clip-path="url(#vclip)">
<rect x="834" y="286" width="205" height="116" fill="url(#wood)"/>
<g filter="url(#b1)">
<path d="M830 282 H1043 V289.6 L830 301.4 Z" fill="#c9d6e0"/>
<path d="M830 301.4 L1043 289.6 V294.4 L830 306 Z" fill="#8e5a2e"/>
<rect x="891.6" y="284" width="15" height="8.5" fill="#eeeae0"/>
<path d="M897 284 h9 v3 q-4.5 3 -9 0 Z" fill="#7a5a2e"/>
<rect x="893" y="292.5" width="10" height="3.5" fill="#9aa89a"/>
<path d="M830 308 C838 304 849 306 850 316 C851.5 318 851 324 849.5 326 L848 336 C845 341 838 342 830 341 Z" fill="#b8907c"/>
<path d="M830 324 C836 322 840 326 838 336 L830 338 Z" fill="#a88472" opacity="0.8"/>
<path d="M830 300 C840 298 851 302 850.5 318 C848 311 842 309 836 312 L830 314 Z" fill="#6e6c6e"/>
<path d="M830 342 C838 343 846 336 850 333 C860 336 866 346 868 356 L873 388 L830 388 Z" fill="#2a3458"/>
<path d="M843 350 l1 34" fill="none" stroke="#4a5478" stroke-width="1"/>
<rect x="866" y="296" width="9" height="110" fill="#4a2810" opacity="0.1"/>
<rect x="905" y="296" width="9" height="110" fill="#4a2810" opacity="0.08"/>
<rect x="1012" y="296" width="9" height="110" fill="#4a2810" opacity="0.12"/>
<rect x="1030" y="296" width="9" height="110" fill="#4a2810" opacity="0.25"/>
<rect x="1034" y="286" width="6" height="116" fill="#3a2010" opacity="0.45"/>
<path d="M922 342 C919 318 934 299.5 958 298 C988 296.5 1003 316 1002.5 344 C1003 364 1012 384 1008 396 L1000 405 L926 405 C914 392 919 378 918 366 C918 356 922 350 922 342 Z" fill="#1f171c"/>
<path d="M944 300 C958 296 972 300 980 308 C968 303 956 302 944 300Z" fill="#4a3a40" opacity="0.7"/>
<path d="M897 405 C900 384 912 374 930 369 L960 386 L1000 372 C1015 376 1024 388 1026 405 Z" fill="#ebe8e4"/>
<path d="M986 405 C982 390 990 374 1003 368 C1013 382 1011 396 1005 405 Z" fill="#1f171c"/>
<path d="M930 320 C940 311 958 314 966 326 C972 340 970 362 962 374 C952 384 938 383 930 376 C926 370 929 362 927.5 356 C923.5 354 924.5 350 927 344 C927.5 336 927 326 930 320 Z" fill="#d8a898"/>
<path d="M931 322 C938 316 950 316 956 326 C958 340 950 352 938 352 C932 346 929 334 931 322Z" fill="#e8c2b2" opacity="0.8"/>
<path d="M936 356 C946 352 956 358 958 368 C952 378 940 378 934 372Z" fill="#d09488" opacity="0.7"/>
<path d="M930 320 C944 309 962 314 968 332 C960 323 946 319 930 324 Z" fill="#2a1c22"/>
<path d="M938 339 q7 -4 14 1.4" fill="none" stroke="#3a2228" stroke-width="1.6"/>
<path d="M939 343.5 q5 -1.5 9 1" fill="none" stroke="#4a2c30" stroke-width="1"/>
<path d="M928 365.5 q5 -2.4 10 1.6 q-5 2.4 -10 -1.6Z" fill="#b05c60"/>
<path d="M960 334 C973 346 973 372 958 382 C966 366 966 350 960 334Z" fill="#1f171c"/>
<path d="M922 362 C918 372 920 384 926 392 C923 382 924 372 926 366Z" fill="#1f171c"/>
</g>
<rect x="834" y="382.6" width="151.4" height="18.8" fill="#262626" opacity="0.8"/>
<rect x="836.8" y="395" width="2.3" height="3" fill="#fff"/>
<rect x="840.5" y="392" width="2.3" height="6" fill="#fff"/>
<rect x="844.1999999999999" y="389" width="2.3" height="9" fill="#fff"/>
<rect x="847.9" y="386" width="2.3" height="12" fill="#fff"/>
<text x="856.6" y="397" font-size="13" fill="#fff" textLength="124.8" lengthAdjust="spacingAndGlyphs">Світлана Сальникова</text>
</g>
</svg>
<svg id="lightshot" class="layer" width="1364" height="695" viewBox="0 0 1364 695" >
<rect x="1221" y="632" width="3" height="70" fill="#222" opacity="0.75" filter="url(#b05)"/>
<path d="M899.5 700 V633 a5.5 5.5 0 0 1 5.5 -5.5 H1216.5 a4 4 0 0 1 4 4 V700 Z" fill="url(#lsbg)" stroke="#3a3a3a" stroke-width="1"/>
<text x="912" y="652.5" font-size="15" fill="#1c4a9c" textLength="64" lengthAdjust="spacingAndGlyphs">Lightshot</text>
<text x="912" y="669.8" font-size="12" fill="#161616" textLength="295.5" lengthAdjust="spacingAndGlyphs">Скриншот сохранён в Screenshot_4.png. Кликните для</text>
<text x="912" y="684.6" font-size="12" fill="#161616" textLength="181" lengthAdjust="spacingAndGlyphs">открытия папки со скриншотом.</text>
<path d="M1178.4 640.6 a2.6 2.6 0 0 1 3.6 3 l5 5 a1.2 1.2 0 0 1 -1.8 1.8 l-5 -5 a2.6 2.6 0 0 1 -3 -3.6 l1.8 1.8 l1.4 -1.4 Z" fill="#8a8a8a"/>
<path d="M1198 640.5 L1205 647.5 M1205 640.5 L1198 647.5" fill="none" stroke="#8a8a8a" stroke-width="2"/>
</svg>
</body></html>
